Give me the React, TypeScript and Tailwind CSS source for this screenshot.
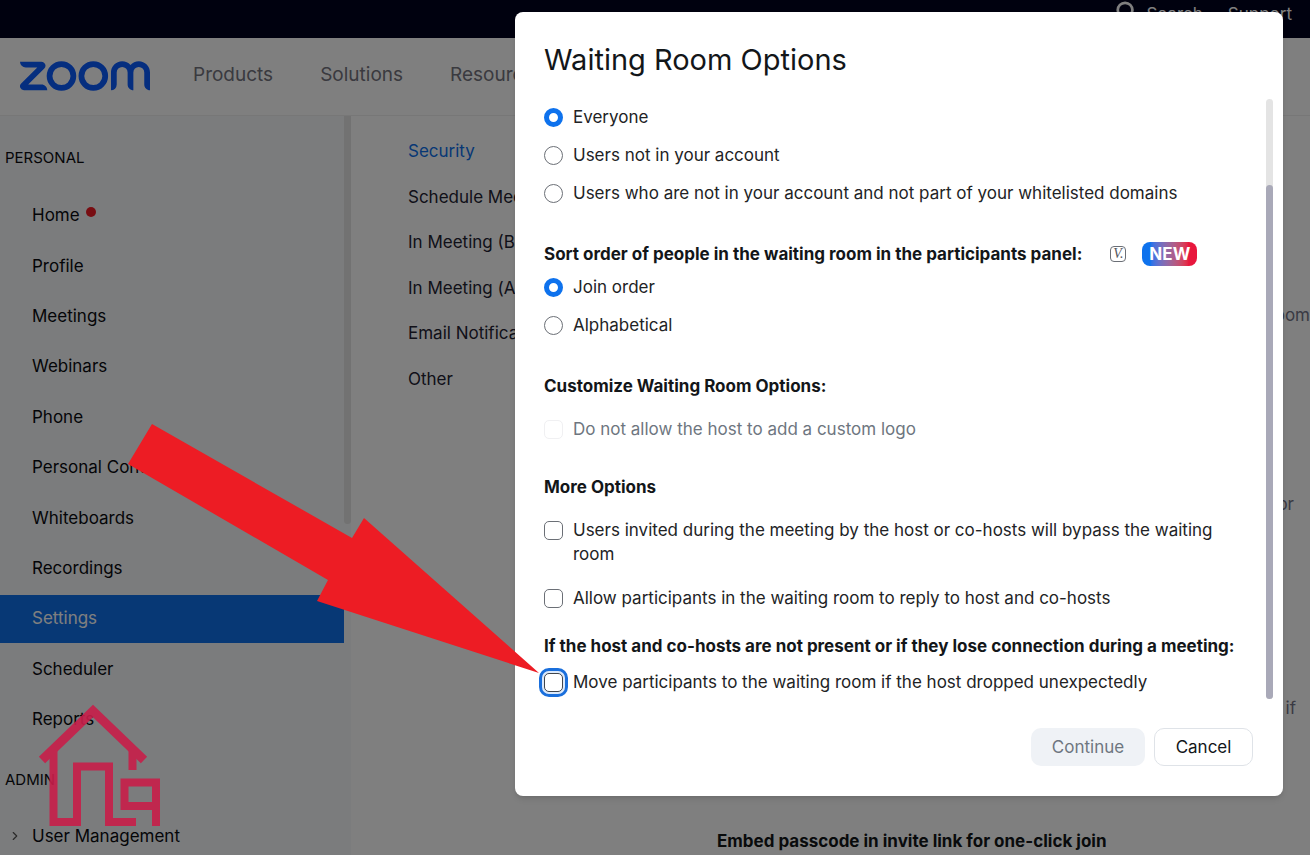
import { ChevronRight, Search } from "lucide-react";
import { SiZoom } from "react-icons/si";

const personalLinks = [
  "Home",
  "Profile",
  "Meetings",
  "Webinars",
  "Phone",
  "Personal Contacts",
  "Whiteboards",
  "Recordings",
  "Settings",
  "Scheduler",
  "Reports",
];

const settingSections = [
  "Security",
  "Schedule Meeting",
  "In Meeting (Basic)",
  "In Meeting (Adv)",
  "Email Notification",
  "Other",
];

function TopBar() {
  return (
    <div className="flex h-[38px] shrink-0 items-start justify-end bg-[#00031f] pr-[18px] text-[17px] leading-7 text-white">
      <a href="#search" className="mr-[25px] flex gap-[9px]">
        <Search className="size-[22px]" strokeWidth={3} />
        Search
      </a>
      <a href="#support">Support</a>
    </div>
  );
}

function Header() {
  return (
    <header className="flex h-[78px] shrink-0 items-center border-b border-[#eeeeee] bg-white pl-5 pb-0.5 text-[19px] text-[#74747f]">
      <a href="#home" aria-label="zoom" className="mr-[43px] flex h-8 w-[130px] items-center justify-center overflow-hidden text-[#0b5cff]">
        <SiZoom className="size-[130px] shrink-0" />
      </a>
      <nav className="flex gap-[47px]">
        <a href="#products">Products</a>
        <a href="#solutions">Solutions</a>
        <a href="#resources">Resources</a>
      </nav>
    </header>
  );
}

function Sidebar() {
  return (
    <aside className="flex w-[351px] shrink-0 bg-[#f7f9fa] text-[17px] text-[#0a0b10]">
      <div className="w-[344px]">
        <h2 className="mt-[30px] mb-[22px] pl-[5px] text-[15px] leading-6">PERSONAL</h2>
        <nav className="flex h-[552px] flex-col justify-between">
          {personalLinks.map((link) => (
            <a
              key={link}
              href={`#${link}`}
              className={
                link === "Settings"
                  ? "flex h-12 items-center bg-[#0e71eb] pl-8 text-white"
                  : "flex h-12 items-center pl-8"
              }
            >
              {link}
              {link === "Home" && <span className="mb-2 ml-1.5 size-2.5 rounded-full bg-[#f01a24]" />}
            </a>
          ))}
        </nav>
        <h2 className="mt-6 mb-8 pl-[5px] text-[15px] leading-6">ADMIN</h2>
        <a href="#users" className="flex items-center pl-2 leading-6">
          <ChevronRight className="mr-2.5 size-3.5 text-[#555555]" />
          User Management
        </a>
      </div>
      <div className="w-[7px]">
        <div className="h-[408px] rounded-b bg-[#e4e4e4]" />
      </div>
    </aside>
  );
}

function SettingsPage() {
  return (
    <main className="flex min-w-0 flex-1 bg-white text-[17px] leading-6">
      <nav className="mt-[23px] ml-[57px] flex h-[252px] w-[309px] shrink-0 flex-col justify-between text-[#232333]">
        {settingSections.map((section) => (
          <a key={section} href={`#${section}`} className={section === "Security" ? "text-[#0e71eb]" : ""}>
            {section}
          </a>
        ))}
      </nav>
      <div className="flex min-w-0 flex-1 flex-col pt-[187px] text-[#747487]">
        <p className="mb-[165px] self-end">room</p>
        <p className="mb-[180px] self-end pr-4">or</p>
        <p className="mb-[109px] self-end pr-3.5">if</p>
        <h3 className="font-bold text-[#131619]">Embed passcode in invite link for one-click join</h3>
      </div>
    </main>
  );
}

function RadioOption({ name, label, checked }: { name: string; label: string; checked?: boolean }) {
  return (
    <label className="flex items-center gap-2.5">
      <input
        type="radio"
        name={name}
        defaultChecked={checked}
        className="size-[19px] shrink-0 appearance-none rounded-full border border-[#6b6f76] bg-white checked:border-[5px] checked:border-[#0e72ed]"
      />
      {label}
    </label>
  );
}

function CheckOption({ label, disabled, focused }: { label: string; disabled?: boolean; focused?: boolean }) {
  return (
    <label className={disabled ? "flex gap-2.5 text-[#6e7680]" : "flex gap-2.5"}>
      <input
        type="checkbox"
        disabled={disabled}
        className={
          focused
            ? "mt-[3px] size-[19px] shrink-0 appearance-none rounded-[5px] border border-[#3f444b] bg-white outline-3 outline-offset-2 outline-[#1a6fdc] ring-2 ring-[#dbe9fb]"
            : "mt-[3px] size-[19px] shrink-0 appearance-none rounded-[5px] border border-[#6b6f76] bg-white disabled:border-[#f0f0f2]"
        }
      />
      {label}
    </label>
  );
}

function WaitingRoomDialog() {
  return (
    <div
      role="dialog"
      aria-labelledby="dialog-title"
      className="w-[768px] max-w-full rounded-lg bg-white pt-[30px] pr-2.5 pb-[30px] pl-[29px] text-[17px] leading-6 text-[#222325] shadow-md"
    >
      <h1 id="dialog-title" className="text-[29px] leading-9 text-[#131619]">
        Waiting Room Options
      </h1>

      <div className="mt-[21px] flex">
        <div className="min-w-0 flex-1 pt-1.5 pb-[5px]">
          <div className="flex flex-col gap-3.5">
            <RadioOption name="who" label="Everyone" checked />
            <RadioOption name="who" label="Users not in your account" />
            <RadioOption name="who" label="Users who are not in your account and not part of your whitelisted domains" />
          </div>

          <div className="mt-[37px] flex items-center">
            <h2 className="font-bold text-[#131619]">
              Sort order of people in the waiting room in the participants panel:
            </h2>
            <span className="ml-7 flex size-4 items-center justify-center rounded-[4px] border border-[#6b6f76] font-['Liberation_Serif',serif] text-sm text-[#55585e] italic">
              V.
            </span>
            <span className="ml-4 rounded-lg bg-linear-to-r from-[#0e72ed] from-15% to-[#e8173d] to-85% px-[7px] font-bold text-white">
              NEW
            </span>
          </div>
          <div className="mt-[9px] flex flex-col gap-3.5">
            <RadioOption name="sort" label="Join order" checked />
            <RadioOption name="sort" label="Alphabetical" />
          </div>

          <h2 className="mt-[37px] mb-[19px] font-bold text-[#131619]">Customize Waiting Room Options:</h2>
          <CheckOption label="Do not allow the host to add a custom logo" disabled />

          <h2 className="mt-[34px] mb-[19px] font-bold text-[#131619]">More Options</h2>
          <div className="flex flex-col gap-5 pr-5">
            <CheckOption label="Users invited during the meeting by the host or co-hosts will bypass the waiting room" />
            <CheckOption label="Allow participants in the waiting room to reply to host and co-hosts" />
          </div>

          <h2 className="mt-6 mb-3 font-bold whitespace-nowrap text-[#131619]">
            If the host and co-hosts are not present or if they lose connection during a meeting:
          </h2>
          <CheckOption label="Move participants to the waiting room if the host dropped unexpectedly" focused />
        </div>

        <div className="w-[7px] shrink-0 rounded-full bg-[#e4e4e4] pt-[86px]">
          <div className="h-full rounded-full bg-[#a9a9b8]" />
        </div>
      </div>

      <div className="mt-[29px] flex justify-end gap-[9px] pr-5">
        <button type="button" disabled className="h-[38px] w-[114px] rounded-[10px] bg-[#eff2f6] text-[#6e7680]">
          Continue
        </button>
        <button type="button" className="h-[38px] w-[99px] rounded-[10px] border border-[#dfe3e8] text-[#131619]">
          Cancel
        </button>
      </div>
    </div>
  );
}

export default function App() {
  return (
    <div className="relative flex h-screen flex-col overflow-hidden bg-white font-[Inter,'Liberation_Sans',sans-serif]">
      <TopBar />
      <Header />
      <div className="flex min-h-0 flex-1">
        <Sidebar />
        <SettingsPage />
      </div>

      <div className="absolute inset-0 flex items-start justify-end bg-black/50 pt-3 pr-[27px]">
        <WaitingRoomDialog />
      </div>

      {/* Arrow pointing at the last option */}
      <svg viewBox="0 0 412 251" className="pointer-events-none absolute top-[424px] left-[128px] h-[251px] w-[412px]">
        <path d="M24 0L224 114L236 94L411 249L189 177L200 156L0 40Z" fill="#ed1c24" />
      </svg>

      {/* House watermark */}
      <svg
        viewBox="0 0 124 124"
        className="pointer-events-none absolute top-[704px] left-[38px] h-[124px] w-[124px] opacity-90"
        fill="none"
        stroke="#c81e4a"
        strokeWidth="8"
      >
        <path d="M4 56L55 7L106 56" strokeWidth="9" />
        <path d="M15.500 46V118H39V62.500H71V118H98" />
        <path d="M94.500 47V66" />
        <path d="M118 122V78.500H86.500V102H118" />
      </svg>
    </div>
  );
}
